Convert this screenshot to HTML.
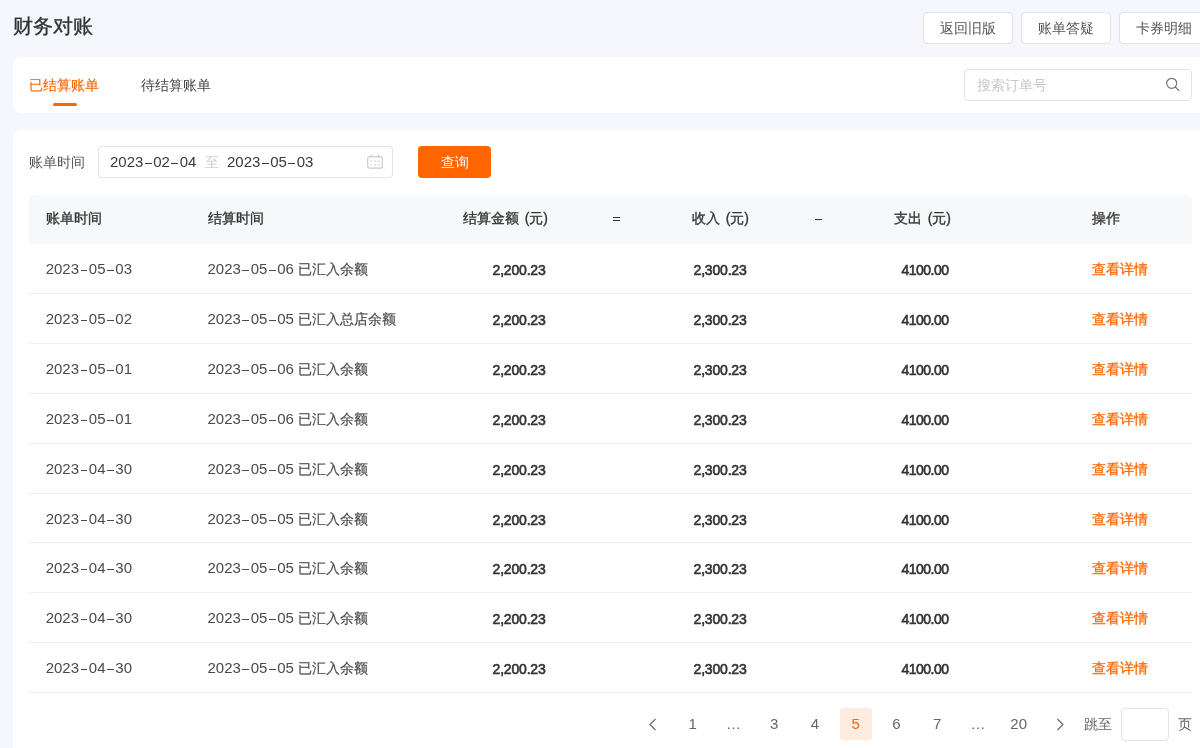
<!DOCTYPE html>
<html><head><meta charset="utf-8">
<style>
*{box-sizing:border-box;margin:0;padding:0}
html,body{width:1200px;height:748px;overflow:hidden}
#wrap{position:absolute;left:0;top:0;width:1200px;height:748px;will-change:transform}
body{background:#f5f7fc;font-family:"Liberation Sans",sans-serif;color:#555;position:relative}
.abs{position:absolute}
.title{left:13px;top:12px;font-size:20px;line-height:28px;color:#333;white-space:nowrap;-webkit-text-stroke:0.35px #333}
.tbtn{top:12px;height:32px;width:90px;border:1px solid #e3e3e3;border-radius:4px;background:#fff;font-size:14px;line-height:30px;text-align:center;color:#555}
.card{background:#fff;border-radius:8px}
.tab{font-size:14px;line-height:20px;white-space:nowrap}
.search{left:964px;top:69px;width:228px;height:32px;border:1px solid #e3e3e3;border-radius:4px;background:#fff}
.search span{position:absolute;left:12px;top:4.5px;font-size:14px;line-height:20px;color:#c8c8c8}
.label{font-size:14px;line-height:20px;color:#555;white-space:nowrap}
.picker{left:98px;top:146px;width:295px;height:32px;border:1px solid #e3e3e3;border-radius:4px}
.date{position:absolute;top:5px;font-size:15px;line-height:20px;color:#3a3a3a;white-space:nowrap}
i.d{display:inline-block;width:6.7px;height:1.4px;background:currentColor;vertical-align:3px;margin:0 1.5px 0 1.6px}
.qbtn{left:418px;top:146px;width:73px;height:32px;background:#ff6600;border-radius:4px;color:#fff;font-size:14px;line-height:32px;text-align:center}
.thead{left:29px;top:195px;width:1163px;height:49px;background:#f7f8fa;border-radius:6px 6px 0 0}
.row{position:absolute;left:29px;width:1163px;height:49.875px;border-bottom:1px solid #f0f0f0}
.c{position:absolute;top:0;white-space:nowrap}
.th .c{top:-1px;font-size:14px;line-height:49px;color:#333;-webkit-text-stroke:0.32px #333}
.row .c{font-size:15px;line-height:49px;color:#4a4a4a}
.row .n{font-size:14px;color:#333;-webkit-text-stroke:0.6px #333;letter-spacing:-0.2px;top:2.25px}
.row .op{top:1px;font-size:14px;color:#ff6600;-webkit-text-stroke:0.25px #ff6600}
.cn{font-size:14px;-webkit-text-stroke:0.2px #4a4a4a}
.pg{top:708px;height:32px;width:32px;font-size:15px;line-height:32px;text-align:center;color:#666}
</style></head><body><div id="wrap">
<div class="abs title">财务对账</div>
<div class="abs tbtn" style="left:923px">返回旧版</div>
<div class="abs tbtn" style="left:1021px">账单答疑</div>
<div class="abs tbtn" style="left:1119px">卡券明细</div>
<div class="abs card" style="left:13px;top:57px;width:1195px;height:56px"></div>
<div class="abs tab" style="left:29px;top:75px;color:#ff6600;-webkit-text-stroke:0.15px #ff6600">已结算账单</div>
<div class="abs" style="left:52.5px;top:103px;width:24px;height:3px;border-radius:2px;background:#ff6600"></div>
<div class="abs tab" style="left:141px;top:75px;color:#444">待结算账单</div>
<div class="abs search"><span>搜索订单号</span>
<svg style="position:absolute;left:200px;top:7px" width="16" height="16" viewBox="0 0 16 16"><circle cx="6.7" cy="6.3" r="5" fill="none" stroke="#707070" stroke-width="1.15"/><path d="M10.3 10 L14 13.6" stroke="#707070" stroke-width="1.25" stroke-linecap="round"/></svg>
</div>
<div class="abs card" style="left:13px;top:130px;width:1195px;height:640px"></div>
<div class="abs label" style="left:29px;top:152px">账单时间</div>
<div class="abs picker">
<span class="date" style="left:11px">2023<i class="d"></i>02<i class="d"></i>04</span>
<span class="date" style="left:106px;font-size:14px;color:#ccc">至</span>
<span class="date" style="left:128px">2023<i class="d"></i>05<i class="d"></i>03</span>
<svg style="position:absolute;left:268px;top:7px" width="16" height="16" viewBox="0 0 16 16"><rect x="0.7" y="2.6" width="14.6" height="11.6" rx="2" fill="none" stroke="#ccc" stroke-width="1.2"/><path d="M4.5 0.6v3M11.5 0.6v3" stroke="#ccc" stroke-width="1.2"/><g fill="#ccc"><rect x="3.5" y="6.5" width="1.6" height="1.2"/><rect x="7.2" y="6.5" width="1.6" height="1.2"/><rect x="10.9" y="6.5" width="1.6" height="1.2"/><rect x="3.5" y="10.3" width="1.6" height="1.2"/><rect x="7.2" y="10.3" width="1.6" height="1.2"/><rect x="10.9" y="10.3" width="1.6" height="1.2"/></g></svg>
</div>
<div class="abs qbtn">查询</div>
<div class="abs thead th">
<span class="c" style="left:16.7px">账单时间</span>
<span class="c" style="left:178.5px">结算时间</span>
<span class="c" style="right:644px">结算金额 <span style="margin-left:1.5px">(元)</span></span>

<span class="c" style="right:443px">收入 <span style="margin-left:1.5px">(元)</span></span>

<span class="c" style="right:241px">支出 <span style="margin-left:1.5px">(元)</span></span>
<span class="c" style="left:1063px">操作</span>
</div>
<div class="abs" style="left:613px;top:217.1px;width:7px;height:1.3px;background:#333"></div><div class="abs" style="left:613px;top:220.2px;width:7px;height:1.3px;background:#333"></div><div class="abs" style="left:815px;top:218.5px;width:7px;height:1.3px;background:#333"></div>
<div class="row" style="top:244px;height:50px">
<span class="c" style="left:16.7px">2023<i class="d"></i>05<i class="d"></i>03</span>
<span class="c" style="left:178.5px">2023<i class="d"></i>05<i class="d"></i>06 <span class="cn">已汇入余额</span></span>
<span class="c n" style="right:646.5px">2,200.23</span>
<span class="c n" style="right:445.5px">2,300.23</span>
<span class="c n" style="right:243.5px;letter-spacing:-0.5px">4100.00</span>
<span class="c op" style="left:1063px">查看详情</span>
</div>
<div class="row" style="top:294px;height:50px">
<span class="c" style="left:16.7px">2023<i class="d"></i>05<i class="d"></i>02</span>
<span class="c" style="left:178.5px">2023<i class="d"></i>05<i class="d"></i>05 <span class="cn">已汇入总店余额</span></span>
<span class="c n" style="right:646.5px">2,200.23</span>
<span class="c n" style="right:445.5px">2,300.23</span>
<span class="c n" style="right:243.5px;letter-spacing:-0.5px">4100.00</span>
<span class="c op" style="left:1063px">查看详情</span>
</div>
<div class="row" style="top:344px;height:50px">
<span class="c" style="left:16.7px">2023<i class="d"></i>05<i class="d"></i>01</span>
<span class="c" style="left:178.5px">2023<i class="d"></i>05<i class="d"></i>06 <span class="cn">已汇入余额</span></span>
<span class="c n" style="right:646.5px">2,200.23</span>
<span class="c n" style="right:445.5px">2,300.23</span>
<span class="c n" style="right:243.5px;letter-spacing:-0.5px">4100.00</span>
<span class="c op" style="left:1063px">查看详情</span>
</div>
<div class="row" style="top:394px;height:50px">
<span class="c" style="left:16.7px">2023<i class="d"></i>05<i class="d"></i>01</span>
<span class="c" style="left:178.5px">2023<i class="d"></i>05<i class="d"></i>06 <span class="cn">已汇入余额</span></span>
<span class="c n" style="right:646.5px">2,200.23</span>
<span class="c n" style="right:445.5px">2,300.23</span>
<span class="c n" style="right:243.5px;letter-spacing:-0.5px">4100.00</span>
<span class="c op" style="left:1063px">查看详情</span>
</div>
<div class="row" style="top:444px;height:50px">
<span class="c" style="left:16.7px">2023<i class="d"></i>04<i class="d"></i>30</span>
<span class="c" style="left:178.5px">2023<i class="d"></i>05<i class="d"></i>05 <span class="cn">已汇入余额</span></span>
<span class="c n" style="right:646.5px">2,200.23</span>
<span class="c n" style="right:445.5px">2,300.23</span>
<span class="c n" style="right:243.5px;letter-spacing:-0.5px">4100.00</span>
<span class="c op" style="left:1063px">查看详情</span>
</div>
<div class="row" style="top:494px;height:49px">
<span class="c" style="left:16.7px">2023<i class="d"></i>04<i class="d"></i>30</span>
<span class="c" style="left:178.5px">2023<i class="d"></i>05<i class="d"></i>05 <span class="cn">已汇入余额</span></span>
<span class="c n" style="right:646.5px">2,200.23</span>
<span class="c n" style="right:445.5px">2,300.23</span>
<span class="c n" style="right:243.5px;letter-spacing:-0.5px">4100.00</span>
<span class="c op" style="left:1063px">查看详情</span>
</div>
<div class="row" style="top:543px;height:50px">
<span class="c" style="left:16.7px">2023<i class="d"></i>04<i class="d"></i>30</span>
<span class="c" style="left:178.5px">2023<i class="d"></i>05<i class="d"></i>05 <span class="cn">已汇入余额</span></span>
<span class="c n" style="right:646.5px">2,200.23</span>
<span class="c n" style="right:445.5px">2,300.23</span>
<span class="c n" style="right:243.5px;letter-spacing:-0.5px">4100.00</span>
<span class="c op" style="left:1063px">查看详情</span>
</div>
<div class="row" style="top:593px;height:50px">
<span class="c" style="left:16.7px">2023<i class="d"></i>04<i class="d"></i>30</span>
<span class="c" style="left:178.5px">2023<i class="d"></i>05<i class="d"></i>05 <span class="cn">已汇入余额</span></span>
<span class="c n" style="right:646.5px">2,200.23</span>
<span class="c n" style="right:445.5px">2,300.23</span>
<span class="c n" style="right:243.5px;letter-spacing:-0.5px">4100.00</span>
<span class="c op" style="left:1063px">查看详情</span>
</div>
<div class="row" style="top:643px;height:50px">
<span class="c" style="left:16.7px">2023<i class="d"></i>04<i class="d"></i>30</span>
<span class="c" style="left:178.5px">2023<i class="d"></i>05<i class="d"></i>05 <span class="cn">已汇入余额</span></span>
<span class="c n" style="right:646.5px">2,200.23</span>
<span class="c n" style="right:445.5px">2,300.23</span>
<span class="c n" style="right:243.5px;letter-spacing:-0.5px">4100.00</span>
<span class="c op" style="left:1063px">查看详情</span>
</div>
<svg class="abs" style="left:648.50px;top:718px" width="8" height="13" viewBox="0 0 8 13"><path d="M6.5 1 L1 6.5 L6.5 12" fill="none" stroke="#666" stroke-width="1.1"/></svg>
<div class="abs pg" style="left:676.74px">1</div>
<div class="abs pg" style="left:717.48px">…</div>
<div class="abs pg" style="left:758.22px">3</div>
<div class="abs pg" style="left:798.96px">4</div>
<div class="abs pg" style="left:839.70px;background:#ffece0;border-radius:4px;color:#ff6600">5</div>
<div class="abs pg" style="left:880.44px">6</div>
<div class="abs pg" style="left:921.18px">7</div>
<div class="abs pg" style="left:961.92px">…</div>
<div class="abs pg" style="left:1002.66px">20</div>
<svg class="abs" style="left:1055.90px;top:718px" width="8" height="13" viewBox="0 0 8 13"><path d="M1.5 1 L7 6.5 L1.5 12" fill="none" stroke="#666" stroke-width="1.1"/></svg>
<div class="abs label" style="left:1084px;top:714px;color:#666">跳至</div>
<div class="abs" style="left:1120.5px;top:708px;width:48.5px;height:32.5px;border:1px solid #e3e3e3;border-radius:4px;background:#fff"></div>
<div class="abs label" style="left:1178px;top:714px;color:#666">页</div>
</div></body></html>
